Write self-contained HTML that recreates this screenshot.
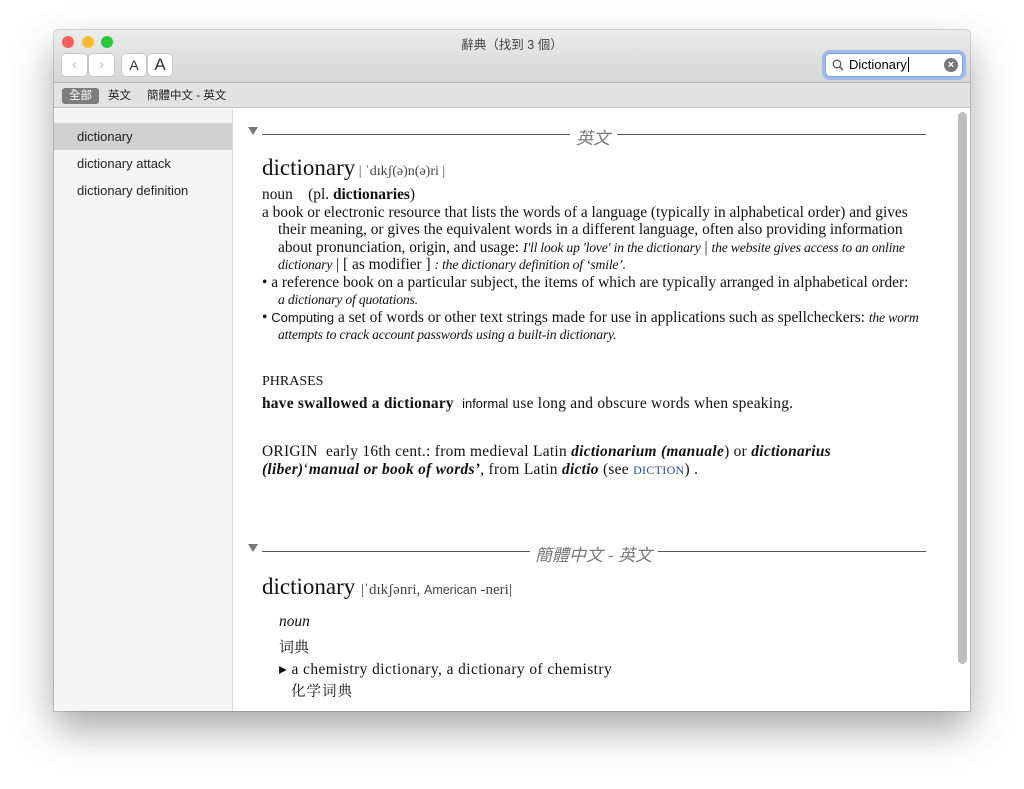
<!DOCTYPE html>
<html><head><meta charset="utf-8"><style>
*{margin:0;padding:0;box-sizing:border-box}
body{width:1024px;height:789px;background:#fff;position:relative;overflow:hidden;font-family:"Liberation Sans","Noto Sans CJK TC",sans-serif}
.win{position:absolute;left:54px;top:30px;width:916px;height:681px;background:#fff;box-shadow:0 18px 40px rgba(0,0,0,.35),0 0 0 1px rgba(0,0,0,.15);border-radius:5px 5px 0 0;overflow:hidden}
.tb{position:absolute;left:0;top:0;width:916px;height:53px;background:linear-gradient(#ebebeb,#d6d6d6);border-bottom:1px solid #b9b9b9}
.dot{position:absolute;top:6px;width:12px;height:12px;border-radius:50%}
.title{position:absolute;top:4px;left:0;width:916px;text-align:center;font-size:12.5px;color:#444}
.btn{position:absolute;top:24px;height:22px;background:#fff;border-radius:4px;box-shadow:0 0 0 1px #c8c8c8;font-size:15px;color:#333;text-align:center;line-height:22px}
.tabs{position:absolute;left:0;top:53px;width:916px;height:25px;background:#e2e2e2;border-bottom:1px solid #c4c4c4;font-size:11.5px;color:#222}
.side{position:absolute;left:0;top:79px;width:179px;height:602px;background:#f5f5f5;border-right:1px solid #d8d8d8;font-size:13px;color:#222}
.p{position:absolute;white-space:nowrap;font-family:"Liberation Serif","Noto Serif CJK SC",serif;font-size:15.4px;color:#111}
i{font-style:italic}
i.c{font-size:13.7px;letter-spacing:-.2px}
.hr{position:absolute;height:1px;background:#555}
.tri{position:absolute;width:0;height:0;border-left:5px solid transparent;border-right:5px solid transparent;border-top:8px solid #777}
.sec{position:absolute;font-style:italic;font-size:17px;color:#777;font-family:"Liberation Sans","Noto Sans CJK TC",sans-serif;white-space:nowrap}
</style></head><body>
<div class="win">
 <div class="tb">
  <div class="dot" style="left:8px;background:#fc5f57"></div>
  <div class="dot" style="left:28px;background:#fdbc2e"></div>
  <div class="dot" style="left:47px;background:#29c840"></div>
  <div class="title">辭典（找到 3 個）</div>
  <div class="btn" style="left:8px;width:25px;color:#bbb">&#8249;</div>
  <div class="btn" style="left:35px;width:25px;color:#bbb">&#8250;</div>
  <div class="btn" style="left:68px;width:24px;font-size:14px">A</div>
  <div class="btn" style="left:94px;width:24px;font-size:17px">A</div>
  <div style="position:absolute;left:771px;top:23px;width:138px;height:24px;border-radius:5px;background:#fff;box-shadow:0 0 0 3px #9dbbe8;border:1px solid #7fa4db"></div>
  <svg style="position:absolute;left:778px;top:29px" width="12" height="12"><circle cx="5" cy="5" r="3.8" fill="none" stroke="#555" stroke-width="1.3"/><line x1="8" y1="8" x2="11" y2="11" stroke="#555" stroke-width="1.5"/></svg>
  <div style="position:absolute;left:795px;top:27px;font-size:13px;color:#000">Dictionary<span style="border-left:1px solid #000;margin-left:1px"></span></div>
  <div style="position:absolute;left:890px;top:28px;width:14px;height:14px;border-radius:50%;background:#777;color:#fff;font-size:11px;line-height:14px;text-align:center;font-weight:bold">×</div>
 </div>
 <div class="tabs">
  <div style="position:absolute;left:8px;top:5px;width:37px;height:16px;background:#7d7d7d;border-radius:3px;color:#fff;text-align:center;line-height:16px">全部</div>
  <div style="position:absolute;left:54px;top:5px;line-height:16px">英文</div>
  <div style="position:absolute;left:93px;top:5px;line-height:16px">簡體中文 - 英文</div>
 </div>
 <div class="side">
  <div style="position:absolute;left:0;top:14px;width:178px;height:27px;background:#d0d0d0"></div>
  <div style="position:absolute;left:23px;top:20px">dictionary</div>
  <div style="position:absolute;left:23px;top:47px">dictionary attack</div>
  <div style="position:absolute;left:23px;top:74px">dictionary definition</div>
 </div>
 <div style="position:absolute;left:904px;top:82px;width:9px;height:552px;border-radius:5px;background:#bdbdbd"></div>
</div>

<div class="tri" style="left:248px;top:127px"></div>
<div class="hr" style="left:262px;top:134px;width:308px"></div>
<div class="sec" style="left:576px;top:124px">英文</div>
<div class="hr" style="left:617px;top:134px;width:309px"></div>

<div class="p" style="left:262px;top:155px;font-size:23px">dictionary<span style="font-size:14px;color:#444"> | ˈdɪkʃ(ə)n(ə)ri |</span></div>
<div class="p" style="left:262px;top:186px">noun &nbsp;&nbsp; (pl. <b>dictionaries</b>)</div>
<div class="p" style="left:262px;top:204px">a book or electronic resource that lists the words of a language (typically in alphabetical order) and gives</div>
<div class="p" style="left:278px;top:221px">their meaning, or gives the equivalent words in a different language, often also providing information</div>
<div class="p" style="left:278px;top:239px">about pronunciation, origin, and usage: <i class="c">I'll look up 'love' in the dictionary</i> | <i class="c">the website gives access to an online</i></div>
<div class="p" style="left:278px;top:256px"><i class="c">dictionary</i> | [ as modifier ] <i class="c">: the dictionary definition of ‘smile’.</i></div>
<div class="p" style="left:262px;top:274px">• a reference book on a particular subject, the items of which are typically arranged in alphabetical order:</div>
<div class="p" style="left:278px;top:291px"><i class="c">a dictionary of quotations.</i></div>
<div class="p" style="left:262px;top:309px">• <span style="font-family:'Liberation Sans';font-size:13px">Computing</span> a set of words or other text strings made for use in applications such as spellcheckers: <i class="c">the worm</i></div>
<div class="p" style="left:278px;top:326px"><i class="c">attempts to crack account passwords using a built-in dictionary.</i></div>

<div class="p" style="left:262px;top:374px;font-size:14px">PHRASES</div>
<div class="p" style="left:262px;top:395px;letter-spacing:.25px"><b>have swallowed a dictionary</b> &nbsp;<span style="font-family:'Liberation Sans';font-size:13px;letter-spacing:0">informal</span> use long and obscure words when speaking.</div>
<div class="p" style="left:262px;top:443px;letter-spacing:.3px">ORIGIN &nbsp;early 16th cent.: from medieval Latin <b><i>dictionarium (manuale</i></b>) or <b><i>dictionarius</i></b></div>
<div class="p" style="left:262px;top:461px;letter-spacing:.3px"><b><i>(liber)</i></b>‘<b><i>manual or book of words’</i></b>, from Latin <b><i>dictio</i></b> (see <span style="font-size:12px;color:#2a4d8a">DICTION</span>) .</div>

<div class="tri" style="left:248px;top:544px"></div>
<div class="hr" style="left:262px;top:551px;width:268px"></div>
<div class="sec" style="left:535px;top:541px">簡體中文 - 英文</div>
<div class="hr" style="left:658px;top:551px;width:268px"></div>

<div class="p" style="left:262px;top:574px;font-size:23px">dictionary <span style="font-size:15px;color:#444">|ˈdɪkʃənri, <span style="font-family:'Liberation Sans';font-size:12.5px">American</span> -neri|</span></div>
<div class="p" style="left:279px;top:613px"><i>noun</i></div>
<div class="p" style="left:279px;top:636px;font-size:15px">词典</div>
<div class="p" style="left:279px;top:660px;letter-spacing:.45px">▸ a chemistry dictionary, a dictionary of chemistry</div>
<div class="p" style="left:291px;top:680px;letter-spacing:1px;font-size:14.5px">化学词典</div>
</body></html>
